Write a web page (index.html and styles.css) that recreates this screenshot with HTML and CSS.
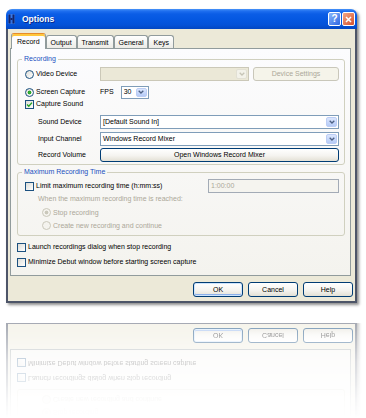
FILE: index.html
```html
<!DOCTYPE html>
<html lang="en">
<head>
    <meta charset="UTF-8">
    <meta name="viewport" content="width=device-width, initial-scale=1.0">
    <title>Options</title>
    <link rel="stylesheet" href="styles.css">
</head>
<body>
    <div class="window">
        <div class="titlebar">
            <svg class="app-icon" width="7" height="10" viewBox="0 0 7 10">
                <rect x="0" y="0" width="7" height="10" fill="#8fb0ec" opacity="0.35"/>
                <rect x="0.5" y="0.5" width="2" height="9" fill="#14246a"/>
                <rect x="4.5" y="0.5" width="2" height="9" fill="#14246a"/>
                <rect x="2.5" y="4" width="2" height="2" fill="#14246a"/>
            </svg>
            <span class="title">Options</span>
            <span class="cap-btn help">?</span>
            <span class="cap-btn close">
                <svg width="7" height="7" viewBox="0 0 7 7"><path d="M1 1 L6 6 M6 1 L1 6" stroke="#fff" stroke-width="1.5"/></svg>
            </span>
        </div>

        <div class="client">
            <div class="tabs">
                <span class="tab active">Record</span>
                <span class="tab">Output</span>
                <span class="tab">Transmit</span>
                <span class="tab">General</span>
                <span class="tab">Keys</span>
            </div>

            <div class="pane">
                <fieldset class="group">
                    <legend>Recording</legend>
                    <div class="row tall">
                        <span class="opt lead"><span class="radio"></span>Video Device</span>
                        <span class="combo off video">
                            <span class="val"></span>
                            <span class="arrow"><svg width="6" height="4" viewBox="0 0 6 4"><path d="M0.7 0.7 L3 3 L5.3 0.7" stroke="#c6c4b6" stroke-width="1.3" fill="none"/></svg></span>
                        </span>
                        <span class="btn off settings">Device Settings</span>
                    </div>
                    <div class="row">
                        <span class="opt lead"><span class="radio on"></span>Screen Capture</span>
                        <span class="fps">FPS</span>
                        <span class="combo fps-box">
                            <span class="val">30</span>
                            <span class="arrow"><svg width="6" height="4" viewBox="0 0 6 4"><path d="M0.7 0.7 L3 3 L5.3 0.7" stroke="#4d6185" stroke-width="1.3" fill="none"/></svg></span>
                        </span>
                    </div>
                    <div class="row short">
                        <span class="opt"><span class="check"><svg width="7" height="7" viewBox="0 0 7 7"><path d="M1 3.4 L2.8 5.2 L6 1.6" stroke="#21a121" stroke-width="1.4" fill="none"/></svg></span>Capture Sound</span>
                    </div>
                    <div class="row spaced">
                        <span class="field-label">Sound Device</span>
                        <span class="combo grow">
                            <span class="val">[Default Sound In]</span>
                            <span class="arrow"><svg width="6" height="4" viewBox="0 0 6 4"><path d="M0.7 0.7 L3 3 L5.3 0.7" stroke="#4d6185" stroke-width="1.3" fill="none"/></svg></span>
                        </span>
                    </div>
                    <div class="row">
                        <span class="field-label">Input Channel</span>
                        <span class="combo grow">
                            <span class="val">Windows Record Mixer</span>
                            <span class="arrow"><svg width="6" height="4" viewBox="0 0 6 4"><path d="M0.7 0.7 L3 3 L5.3 0.7" stroke="#4d6185" stroke-width="1.3" fill="none"/></svg></span>
                        </span>
                    </div>
                    <div class="row tight">
                        <span class="field-label">Record Volume</span>
                        <span class="btn grow">Open Windows Record Mixer</span>
                    </div>
                </fieldset>

                <fieldset class="group second">
                    <legend>Maximum Recording Time</legend>
                    <div class="row">
                        <span class="opt"><span class="check"></span>Limit maximum recording time (h:mm:ss)</span>
                        <span class="textbox">1:00:00</span>
                    </div>
                    <div class="row note">
                        <span class="muted indent">When the maximum recording time is reached:</span>
                    </div>
                    <div class="row sub first">
                        <span class="opt muted indent-more"><span class="radio dim on"></span>Stop recording</span>
                    </div>
                    <div class="row sub">
                        <span class="opt muted indent-more"><span class="radio dim"></span>Create new recording and continue</span>
                    </div>
                </fieldset>

                <div class="row line launch">
                    <span class="opt"><span class="check"></span>Launch recordings dialog when stop recording</span>
                </div>
                <div class="row line">
                    <span class="opt"><span class="check"></span>Minimize Debut window before starting screen capture</span>
                </div>
            </div>

            <div class="buttons">
                <span class="btn default">OK</span>
                <span class="btn">Cancel</span>
                <span class="btn">Help</span>
            </div>
        </div>
    </div>

    <!-- mirrored copy of the dialog's lower part, faded out -->
    <div class="reflection" aria-hidden="true">
        <div class="window mirror">
            <div class="client">
                <div class="pane">
                    <fieldset class="group second">
                        <div class="row sub first">
                            <span class="opt muted indent-more"><span class="radio dim on"></span>Stop recording</span>
                        </div>
                        <div class="row sub">
                            <span class="opt muted indent-more"><span class="radio dim"></span>Create new recording and continue</span>
                        </div>
                    </fieldset>
                    <div class="row line launch">
                        <span class="opt"><span class="check"></span>Launch recordings dialog when stop recording</span>
                    </div>
                    <div class="row line">
                        <span class="opt"><span class="check"></span>Minimize Debut window before starting screen capture</span>
                    </div>
                </div>
                <div class="buttons">
                    <span class="btn default">OK</span>
                    <span class="btn">Cancel</span>
                    <span class="btn">Help</span>
                </div>
            </div>
        </div>
    </div>
</body>
</html>
```

FILE: styles.css
```css
* {
    box-sizing: border-box;
}

body {
    margin: 0;
    background: #fff;
    font-family: "Liberation Sans", Arial, sans-serif;
    font-size: 7px;
    line-height: 8px;
    color: #000;
    overflow: hidden;
}

.window {
    width: 351px;
    height: 294px;
    margin: 9px 0 0 6px;
    display: flex;
    flex-direction: column;
    border-radius: 6px 6px 0 0;
    background: #ece9d8;
    box-shadow: 2px 2px 3px rgba(0, 0, 0, 0.45);
}

/* title bar */
.titlebar {
    height: 20px;
    flex: none;
    display: flex;
    align-items: center;
    padding: 0 2px;
    border-radius: 6px 6px 0 0;
    background: linear-gradient(#4a94f8 0, #1f6ff0 2px, #0b5de6 5px, #0558e2 50%, #0452d8 80%, #0347c2 100%);
    color: #fff;
}

.app-icon {
    margin-right: 7px;
    flex: none;
}

.title {
    flex: 1;
    font-size: 8.5px;
    font-weight: bold;
    text-shadow: 1px 1px #0b2a8a;
}

.cap-btn {
    width: 13px;
    height: 14px;
    margin-left: 1px;
    border: 1px solid #fff;
    border-radius: 2px;
    display: flex;
    align-items: center;
    justify-content: center;
}

.help {
    background: linear-gradient(135deg, #8ab8fc, #2d66e2);
    font-size: 10px;
    font-weight: bold;
}

.close {
    background: linear-gradient(135deg, #f3a888, #d6502b);
}

/* dialog body */
.client {
    flex: 1;
    display: flex;
    flex-direction: column;
    border: 2px solid #4d5568;
    border-top: none;
    padding: 4px 2px 4px 2px;
}

.tabs {
    height: 15px;
    display: flex;
    align-items: flex-end;
    padding-left: 1px;
}

.tab {
    height: 13px;
    padding: 1px 4px 0;
    display: flex;
    align-items: center;
    border: 1px solid #919b9c;
    border-bottom: none;
    border-radius: 3px 3px 0 0;
    background: linear-gradient(#fff, #ecebe6);
}

.tab.active {
    height: 16px;
    margin-bottom: -1px;
    padding: 1px 5px 0;
    position: relative;
    z-index: 1;
    border-top-color: #e68b2c;
    background: #fcfcfe;
    box-shadow: inset 0 2px #ffc73c;
}

.pane {
    height: 228px;
    flex: none;
    margin-right: 2px;
    padding: 6px 5px 0 6px;
    display: flex;
    flex-direction: column;
    border: 1px solid #919b9c;
    background: linear-gradient(#fcfcfe, #f4f3ee);
}

.group {
    margin: 0;
    padding: 0 5px 2px 7px;
    border: 1px solid #d0d0bf;
    border-radius: 3px;
}

.group.second {
    margin-top: 3px;
    padding-bottom: 3px;
}

.group legend {
    margin-left: -3px;
    padding: 0 2px;
    color: #2150c0;
}

.row {
    height: 14px;
    margin-top: 3px;
    display: flex;
    align-items: center;
    white-space: nowrap;
}

.row.tall {
    height: 16px;
}

.row.short {
    height: 10px;
    margin-top: 0;
}

.row.spaced {
    margin-top: 6px;
}

.row.tight {
    margin-top: 2px;
}

.row.note {
    height: 12px;
    margin-top: 0;
}

.row.sub {
    height: 13px;
    margin-top: 0;
}

.row.sub.first {
    margin-top: 1px;
}

.row.line {
    height: 12px;
}

.row.launch {
    margin-top: 5px;
}

.opt {
    display: flex;
    align-items: center;
}

.lead {
    width: 74px;
    flex: none;
}

.field-label {
    width: 62px;
    margin-left: 13px;
    flex: none;
}

.muted {
    color: #aca899;
}

.indent {
    margin-left: 13px;
}

.indent-more {
    margin-left: 17px;
}

.fps {
    margin: 0 7px 0 1px;
}

/* check boxes and radios */
.check {
    width: 9px;
    height: 9px;
    margin-right: 2px;
    flex: none;
    display: flex;
    align-items: center;
    justify-content: center;
    border: 1px solid #1c5180;
    background: linear-gradient(135deg, #dcdcd7, #fff);
}

.radio {
    width: 9px;
    height: 9px;
    margin-right: 2px;
    flex: none;
    border: 1px solid #1c5180;
    border-radius: 50%;
    background: linear-gradient(135deg, #dcdcd7, #fff);
}

.radio.on {
    background: radial-gradient(circle, #3cb43c 0, #21a121 1.6px, transparent 2.2px), linear-gradient(135deg, #dcdcd7, #fff);
}

.radio.dim {
    border-color: #cac8bb;
    background: #f4f3ee;
}

.radio.dim.on {
    background: radial-gradient(circle, #cac8bb 0, #cac8bb 1.6px, transparent 2.2px), #f4f3ee;
}

/* combo boxes */
.combo {
    height: 14px;
    display: flex;
    border: 1px solid #7f9db9;
    background: #fff;
}

.combo .val {
    flex: 1;
    padding-left: 2px;
    display: flex;
    align-items: center;
    overflow: hidden;
}

.combo .arrow {
    width: 11px;
    margin: 1px;
    flex: none;
    display: flex;
    align-items: center;
    justify-content: center;
    border: 1px solid #bccdf5;
    border-radius: 2px;
    background: linear-gradient(#dbe6fd, #b5cbf7);
}

.combo.off {
    border-color: #cbc8b8;
    background: #ebe8d7;
}

.combo.off .arrow {
    border-color: #e2e0d4;
    background: #f3f2ea;
}

.combo.video {
    width: 149px;
    height: 14px;
    margin-left: 1px;
}

.combo.fps-box {
    width: 28px;
    height: 13px;
}

.grow {
    flex: 1;
}

/* push buttons */
.btn {
    height: 14px;
    display: flex;
    align-items: center;
    justify-content: center;
    border: 1px solid #003c74;
    border-radius: 3px;
    background: linear-gradient(#fff 0%, #f5f4f0 55%, #e3e0d5 100%);
}

.btn.off {
    border-color: #c9c7ba;
    background: #f5f4ea;
    color: #aca899;
}

.btn.settings {
    width: 86px;
    margin-left: auto;
}

.textbox {
    width: 131px;
    height: 14px;
    margin-left: auto;
    padding-left: 2px;
    display: flex;
    align-items: center;
    border: 1px solid #a3abb6;
    background: #f5f4ef;
    color: #aca899;
}

.buttons {
    height: 15px;
    margin-top: 6px;
    flex: none;
    display: flex;
    justify-content: flex-end;
    gap: 5px;
}

.buttons .btn {
    width: 50px;
    height: 15px;
}

.btn.default {
    box-shadow: inset 0 0 0 1px #cde4fd, inset 0 -1px 0 1px #8cb0ea;
}

/* reflection under the dialog */
.reflection {
    width: 356px;
    height: 95px;
    margin: 20px 0 0 6px;
    display: flex;
    flex-direction: column;
    justify-content: flex-end;
    overflow: hidden;
    transform: scaleY(-1);
    filter: blur(0.4px);
    -webkit-mask-image: linear-gradient(to top, rgba(0, 0, 0, 0.5), rgba(0, 0, 0, 0.22) 40%, rgba(0, 0, 0, 0.06) 80%, transparent);
    mask-image: linear-gradient(to top, rgba(0, 0, 0, 0.5), rgba(0, 0, 0, 0.22) 40%, rgba(0, 0, 0, 0.06) 80%, transparent);
}

.window.mirror {
    height: 100px;
    margin: 0;
    flex: none;
    border-radius: 0;
}

.mirror .client {
    padding-top: 0;
}

.mirror .pane {
    height: auto;
    flex: 1;
    padding: 0 5px 7px 6px;
    justify-content: flex-end;
    border-top: none;
}

.mirror .group {
    border-top: none;
    border-radius: 0 0 3px 3px;
}
```
